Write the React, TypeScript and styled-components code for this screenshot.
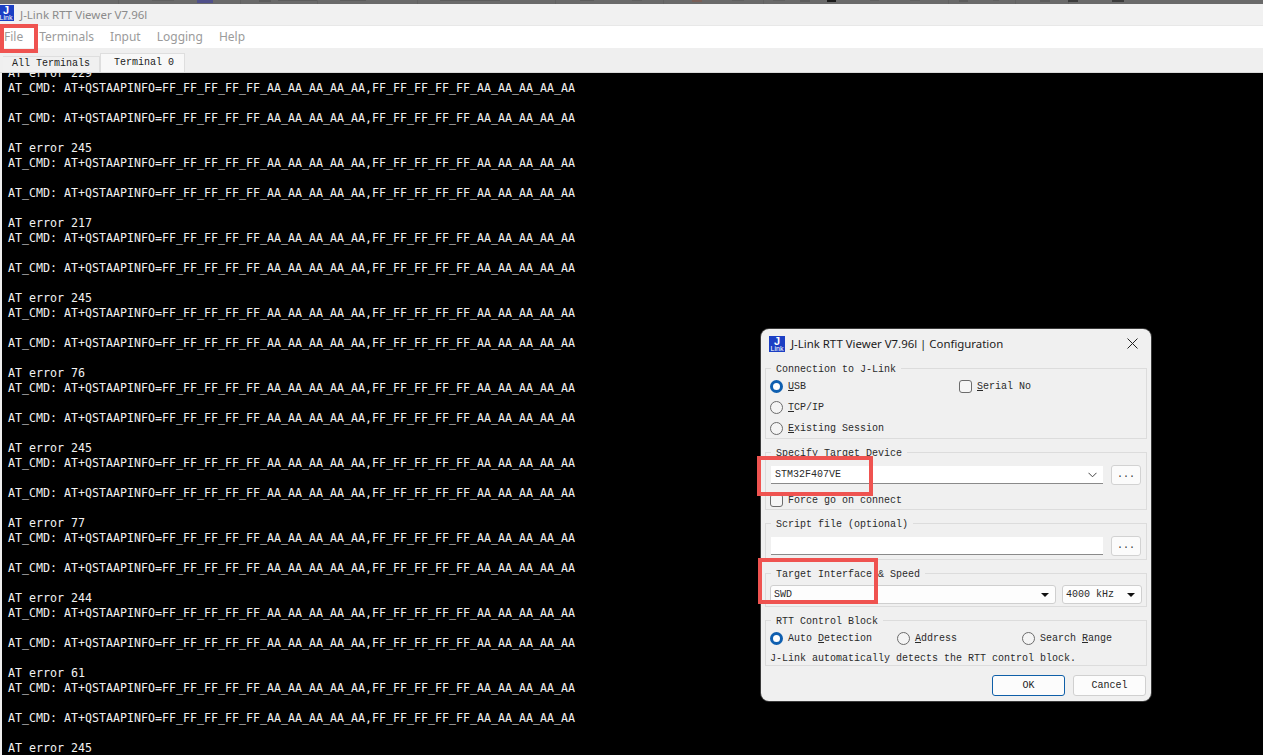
import React from "react";
import styled, { createGlobalStyle } from "styled-components";

const Global = createGlobalStyle`
  html, body { margin: 0; padding: 0; height: 100%; background: #000; overflow: hidden; }
  #root { height: 100%; }
  * { box-sizing: border-box; }
`;

const Page = styled.div`
  position: relative;
  width: 1263px;
  height: 755px;
  display: flex;
  flex-direction: column;
  overflow: hidden;
  background: #efefef;
`;

const GhostRibbon = styled.svg`
  display: block;
  flex: none;
  width: 1263px;
  height: 4px;
  background: #6a6a6a;
`;

const TitleBar = styled.div`
  flex: none;
  height: 22px;
  display: flex;
  align-items: center;
  gap: 6px;
  background: #f1f1f1;
  border-bottom: 1px solid #e8e8e8;
  color: #8b8b8b;
  font: 11.5px "Noto Sans", sans-serif;
`;

const Logo = styled.div`
  flex: none;
  width: 16px;
  height: 16px;
  display: flex;
  flex-direction: column;
  align-items: center;
  background: #1c3fc4;
  color: #fff;
  font-family: "Liberation Sans", sans-serif;
  font-weight: 700;
  overflow: hidden;
`;

const TitleLogo = styled(Logo)`
  align-self: flex-start;
  margin: 1px 0 0 -2px;
`;

const LogoJ = styled.span`
  font-size: 11px;
  line-height: 10px;
`;

const LogoLink = styled.span`
  font-size: 7px;
  line-height: 6px;
  font-weight: 400;
`;

const MenuBar = styled.nav`
  flex: none;
  height: 22px;
  display: flex;
  align-items: center;
  gap: 16px;
  padding: 0 0 1px 4px;
  background: #fff;
  color: #9b9b9b;
  font: 12px "Noto Sans", sans-serif;
`;

const TabStrip = styled.div`
  flex: none;
  height: 25px;
  display: flex;
  align-items: flex-end;
  padding-left: 3px;
  background: #efefef;
  border-bottom: 1px solid #d9d9d9;
`;

const Tab = styled.div<{ $active?: boolean }>`
  height: ${(p) => (p.$active ? 19 : 16)}px;
  padding: ${(p) => (p.$active ? "0 10px 0 13px" : "0 9px 2px 9px")};
  display: flex;
  align-items: center;
  background: ${(p) => (p.$active ? "#f8f8f8" : "#f0f0f0")};
  border: 1px solid #dedede;
  border-bottom: none;
  border-left: ${(p) => (p.$active ? "1px solid #dedede" : "none")};
  color: #222;
  font: 10px/12px "Liberation Mono", monospace;
`;

const TerminalPane = styled.main`
  flex: 1;
  min-height: 0;
  margin-left: 2px;
  background: #000;
  overflow: hidden;
`;

const Log = styled.pre`
  margin: -7px 0 0;
  padding-left: 6px;
  color: #f2f2f2;
  font: 11.63px/15px "DejaVu Sans Mono", monospace;
  white-space: pre;
`;

const Dialog = styled.section`
  position: absolute;
  left: 761px;
  top: 329px;
  width: 390px;
  height: 372px;
  display: flex;
  flex-direction: column;
  padding: 0 4px;
  background: #f0f0f0;
  border-radius: 8px;
  box-shadow: 0 0 0 1px #3a3a3a;
  color: #2a2a2a;
  font: 10px/12px "Liberation Mono", monospace;
`;

const DialogHeader = styled.header`
  flex: none;
  height: 31px;
  display: flex;
  align-items: center;
  gap: 6px;
  padding: 0 5px 2px 4px;
  color: #1b1b1b;
  font: 11.4px "Noto Sans", sans-serif;
`;

const DialogTitle = styled.span`
  flex: 1;
`;

const CloseIcon = styled.svg`
  width: 11px;
  height: 11px;
  margin-right: 4px;
`;

const Group = styled.fieldset<{ $h: number }>`
  flex: none;
  height: ${(p) => p.$h}px;
  margin: 0 0 5px;
  padding: 0 5px 0 4px;
  min-width: 0;
  border: 1px solid #dcdcdc;
`;

const Legend = styled.legend`
  margin-left: 1px;
  padding: 4px 5px 0;
  line-height: 12px;
`;

const ConnectionGrid = styled.div`
  display: grid;
  grid-template-columns: 189px 1fr;
  grid-auto-rows: 21px;
`;

const Option = styled.label<{ $w?: number; $top?: number }>`
  display: flex;
  align-items: center;
  gap: 5px;
  height: 21px;
  margin-top: ${(p) => p.$top ?? 0}px;
  ${(p) => (p.$w ? `width: ${p.$w}px;` : "")}
`;

const Radio = styled.span<{ $on?: boolean }>`
  flex: none;
  width: 13px;
  height: 13px;
  border-radius: 50%;
  background: ${(p) => (p.$on ? "#fff" : "#f4f4f4")};
  border: ${(p) => (p.$on ? "3.5px solid #0f5fb0" : "1px solid #6c6c6c")};
`;

const Check = styled.span`
  flex: none;
  width: 13px;
  height: 13px;
  border-radius: 3px;
  background: #f6f6f6;
  border: 1px solid #6c6c6c;
`;

const Key = styled.span`
  text-decoration: underline;
  text-underline-offset: 1px;
`;

const FieldRow = styled.div<{ $top: number; $gap?: number }>`
  display: flex;
  align-items: center;
  gap: ${(p) => p.$gap ?? 8}px;
  margin-top: ${(p) => p.$top}px;
`;

const Combo = styled.div`
  flex: 1;
  height: 18px;
  margin-left: 1px;
  display: flex;
  align-items: center;
  justify-content: space-between;
  padding: 0 4px;
  background: #fff;
  border-bottom: 1px solid #8a8a8a;
`;

const ChevronIcon = styled.svg`
  width: 9px;
  height: 6px;
  margin-right: 2px;
`;

const Browse = styled.button`
  flex: none;
  width: 30px;
  height: 20px;
  padding: 0;
  background: #fbfbfb;
  border: 1px solid #d2d2d2;
  border-radius: 3px;
  color: #333;
  font: 10px/12px "Liberation Mono", monospace;
`;

const Select = styled.div<{ $w: number }>`
  flex: none;
  width: ${(p) => p.$w}px;
  height: 19px;
  display: flex;
  align-items: center;
  justify-content: space-between;
  padding: 0 6px 0 3px;
  background: #fdfdfd;
  border: 1px solid #cfcfcf;
  border-radius: 3px;
`;

const Caret = styled.span`
  width: 0;
  height: 0;
  border-left: 4px solid transparent;
  border-right: 4px solid transparent;
  border-top: 4px solid #111;
`;

const ModeRow = styled.div`
  display: flex;
  height: 21px;
  margin-bottom: 4px;
`;

const Footer = styled.footer`
  display: flex;
  justify-content: flex-end;
  gap: 8px;
  margin: 4px 1px 0 0;
`;

const DialogButton = styled.button<{ $primary?: boolean }>`
  width: 73px;
  height: 21px;
  padding: 0;
  background: #fcfcfc;
  border: 1px solid ${(p) => (p.$primary ? "#0f5fa8" : "#d0d0d0")};
  border-radius: 3px;
  color: #222;
  font: 10px/12px "Liberation Mono", monospace;
`;

const Annotation = styled.div<{ $x: number; $y: number; $w: number; $h: number }>`
  position: absolute;
  left: ${(p) => p.$x}px;
  top: ${(p) => p.$y}px;
  width: ${(p) => p.$w}px;
  height: ${(p) => p.$h}px;
  border: 4px solid #ef5350;
`;

const errors = [229, 245, 217, 245, 76, 245, 77, 244, 61, 245];
const cmd = "AT_CMD: AT+QSTAAPINFO=FF_FF_FF_FF_FF_AA_AA_AA_AA_AA,FF_FF_FF_FF_FF_AA_AA_AA_AA_AA";
const logText = errors.map((e) => `AT error ${e}\n${cmd}\n\n${cmd}\n\n`).join("");

const ghostMarks: [number, number, number, string][] = [
  [118, 1, 4, "#626262"], [152, 22, 1, "#606060"], [197, 16, 3, "#50508a"], [240, 1, 4, "#626262"],
  [259, 12, 2, "#5c5c5c"], [278, 40, 1, "#5c5c5c"], [317, 1, 4, "#626262"], [340, 26, 1, "#5c5c5c"],
  [417, 1, 4, "#626262"], [440, 60, 1, "#5c5c5c"], [555, 1, 4, "#626262"], [580, 14, 1, "#5c5c5c"],
  [632, 10, 1, "#606060"], [663, 1, 4, "#626262"], [692, 10, 2, "#7a5f58"], [732, 12, 1, "#606060"],
  [763, 1, 4, "#626262"], [773, 12, 1, "#606060"], [800, 10, 2, "#5c5c5c"], [827, 9, 2, "#1a1a1a"],
  [870, 9, 1, "#606060"], [910, 10, 1, "#606060"], [948, 1, 4, "#626262"], [959, 9, 2, "#5c5c5c"],
  [993, 6, 1, "#606060"], [1015, 1, 4, "#626262"], [1040, 10, 2, "#5c5c5c"], [1068, 1, 4, "#626262"],
  [1068, 10, 2, "#3c3c3c"], [1112, 12, 2, "#3c3c3c"],
];

const LogoContent = () => (
  <>
    <LogoJ>J</LogoJ>
    <LogoLink>Link</LogoLink>
  </>
);

const Chevron = () => (
  <ChevronIcon viewBox="0 0 9 6">
    <path d="M0.5 0.8 L4.5 4.8 L8.5 0.8" fill="none" stroke="#444" strokeWidth="1" />
  </ChevronIcon>
);

export default function App() {
  return (
    <Page>
      <Global />
      <GhostRibbon viewBox="0 0 1263 4">
        {ghostMarks.map(([x, w, h, c]) => (
          <rect key={`${x}-${w}`} x={x} y={0} width={w} height={h} fill={c} />
        ))}
      </GhostRibbon>
      <TitleBar>
        <TitleLogo><LogoContent /></TitleLogo>
        <span>J-Link RTT Viewer V7.96l</span>
      </TitleBar>
      <MenuBar>
        <span>File</span>
        <span>Terminals</span>
        <span>Input</span>
        <span>Logging</span>
        <span>Help</span>
      </MenuBar>
      <TabStrip>
        <Tab>All Terminals</Tab>
        <Tab $active>Terminal 0</Tab>
      </TabStrip>
      <TerminalPane>
        <Log>{logText}</Log>
      </TerminalPane>

      <Dialog>
        <DialogHeader>
          <Logo><LogoContent /></Logo>
          <DialogTitle>J-Link RTT Viewer V7.96l | Configuration</DialogTitle>
          <CloseIcon viewBox="0 0 11 11">
            <path d="M0.5 0.5 L10.5 10.5 M10.5 0.5 L0.5 10.5" stroke="#222" strokeWidth="1" />
          </CloseIcon>
        </DialogHeader>

        <Group $h={79}>
          <Legend>Connection to J-Link</Legend>
          <ConnectionGrid>
            <Option><Radio $on /><span><Key>U</Key>SB</span></Option>
            <Option><Check /><span><Key>S</Key>erial No</span></Option>
            <Option><Radio /><span><Key>T</Key>CP/IP</span></Option>
            <span />
            <Option><Radio /><span><Key>E</Key>xisting Session</span></Option>
          </ConnectionGrid>
        </Group>

        <Group $h={66}>
          <Legend>Specify Target Device</Legend>
          <FieldRow $top={5}>
            <Combo>
              <span>STM32F407VE</span>
              <Chevron />
            </Combo>
            <Browse>...</Browse>
          </FieldRow>
          <Option $top={5}>
            <Check />
            <span>Force go on connect</span>
          </Option>
        </Group>

        <Group $h={45}>
          <Legend>Script file (optional)</Legend>
          <FieldRow $top={5}>
            <Combo />
            <Browse>...</Browse>
          </FieldRow>
        </Group>

        <Group $h={42}>
          <Legend>Target Interface &amp; Speed</Legend>
          <FieldRow $top={4} $gap={6}>
            <Select $w={286}>
              <span>SWD</span>
              <Caret />
            </Select>
            <Select $w={80}>
              <span>4000 kHz</span>
              <Caret />
            </Select>
          </FieldRow>
        </Group>

        <Group $h={54}>
          <Legend>RTT Control Block</Legend>
          <ModeRow>
            <Option $w={127}><Radio $on /><span>Auto <Key>D</Key>etection</span></Option>
            <Option $w={125}><Radio /><span><Key>A</Key>ddress</span></Option>
            <Option><Radio /><span>Search <Key>R</Key>ange</span></Option>
          </ModeRow>
          <span>J-Link automatically detects the RTT control block.</span>
        </Group>

        <Footer>
          <DialogButton $primary>OK</DialogButton>
          <DialogButton>Cancel</DialogButton>
        </Footer>
      </Dialog>

      <Annotation $x={0} $y={24} $w={38} $h={29} />
      <Annotation $x={757} $y={456} $w={116} $h={40} />
      <Annotation $x={758} $y={558} $w={120} $h={46} />
    </Page>
  );
}
